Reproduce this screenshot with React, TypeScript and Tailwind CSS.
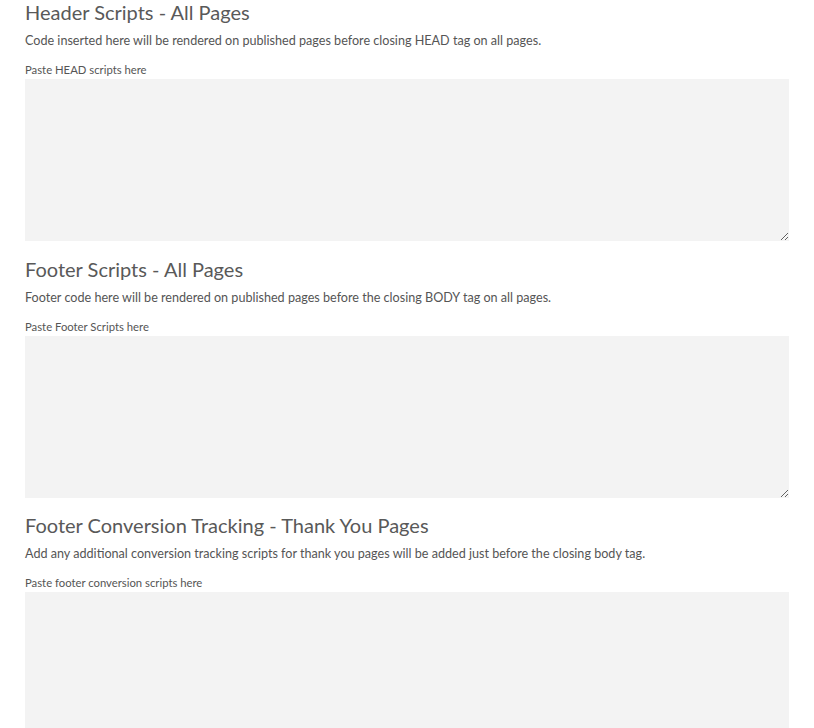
const sections = [
  {
    title: "Header Scripts - All Pages",
    desc: "Code inserted here will be rendered on published pages before closing HEAD tag on all pages.",
    label: "Paste HEAD scripts here",
  },
  {
    title: "Footer Scripts - All Pages",
    desc: "Footer code here will be rendered on published pages before the closing BODY tag on all pages.",
    label: "Paste Footer Scripts here",
  },
  {
    title: "Footer Conversion Tracking - Thank You Pages",
    desc: "Add any additional conversion tracking scripts for thank you pages will be added just before the closing body tag.",
    label: "Paste footer conversion scripts here",
  },
]

export default function App() {
  return (
    <div className="min-h-screen bg-white px-[25px] font-['Lato',sans-serif] text-[#555]">
      {sections.map((s, i) => (
        <div key={s.title} className={i === 0 ? "mb-[16px]" : "mb-[15px]"}>
          <h2 className="text-[20px] leading-[24px] text-[#595959]">{s.title}</h2>
          <p className="mt-[8px] text-[12.6px] leading-[18px]">{s.desc}</p>
          <label className="mt-[13px] mb-[2px] block text-[11.3px] leading-[14px]">{s.label}</label>
          <textarea className="block h-[162px] w-full bg-[#f3f3f3] outline-none" />
        </div>
      ))}
    </div>
  )
}
